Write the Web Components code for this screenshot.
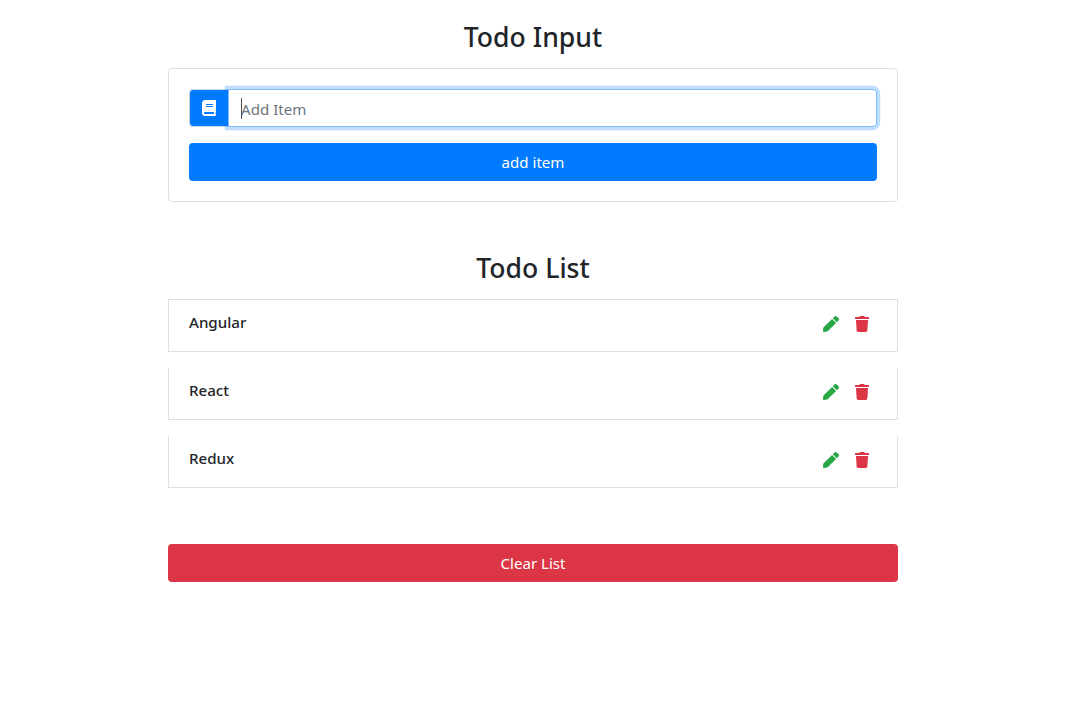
<!DOCTYPE html>
<html lang="en">
<head>
<meta charset="utf-8">
<title>Todo</title>
<style>
body { margin: 0; background: #fff; color: #212529; font: 400 15.1px/24px "Noto Sans", "Open Sans", sans-serif; }
</style>
</head>
<body>
<todo-app></todo-app>
<script>
const ICONS = {
  book: [448, "M448 360V24c0-13.3-10.7-24-24-24H96C43 0 0 43 0 96v320c0 53 43 96 96 96h328c13.3 0 24-10.7 24-24v-16c0-7.5-3.5-14.3-8.9-18.7-4.2-15.4-4.2-59.3 0-74.7 5.4-4.3 8.9-11.1 8.9-18.6zM128 134c0-3.3 2.7-6 6-6h212c3.3 0 6 2.7 6 6v20c0 3.3-2.7 6-6 6H134c-3.3 0-6-2.7-6-6v-20zm0 64c0-3.3 2.7-6 6-6h212c3.3 0 6 2.7 6 6v20c0 3.3-2.7 6-6 6H134c-3.3 0-6-2.7-6-6v-20zm253.4 250H96c-17.7 0-32-14.3-32-32 0-17.6 14.4-32 32-32h285.4c-1.9 17.1-1.9 46.9 0 64z"],
  pen: [512, "M290.74 93.24l128.02 128.02-277.99 277.99-114.14 12.6C11.35 513.54-1.56 500.62.14 485.34l12.7-114.22 277.9-277.88zm207.2-19.06l-60.11-60.11c-18.75-18.75-49.16-18.75-67.91 0l-56.55 56.55 128.02 128.02 56.55-56.55c18.75-18.76 18.75-49.16 0-67.91z"],
  trash: [448, "M432 32H312l-9.4-18.7A24 24 0 0 0 281.1 0H166.8a23.72 23.72 0 0 0-21.4 13.3L136 32H16A16 16 0 0 0 0 48v32a16 16 0 0 0 16 16h416a16 16 0 0 0 16-16V48a16 16 0 0 0-16-16zM53.2 467a48 48 0 0 0 47.9 45h245.8a48 48 0 0 0 47.9-45L416 128H32z"]
};
function define(name, html) {
  customElements.define(name, class extends HTMLElement {
    constructor() {
      super();
      const t = document.createElement("template");
      t.innerHTML = html;
      this.attachShadow({ mode: "open" }).append(t.content.cloneNode(true));
    }
  });
}
customElements.define("fa-icon", class extends HTMLElement {
  connectedCallback() {
    if (this.shadowRoot) return;
    const [w, d] = ICONS[this.getAttribute("name")];
    this.attachShadow({ mode: "open" }).innerHTML =
      `<style>:host{display:block;flex:none}svg{display:block;height:16px;width:${w / 32}px}</style>
       <svg viewBox="0 0 ${w} 512"><path fill="currentColor" d="${d}"/></svg>`;
  }
});
define("todo-heading", `<style>
  :host{display:block}
  h3{margin:0;font-size:26.6px;line-height:34px;font-weight:500;text-align:center}
  </style><h3><slot></slot></h3>`);
define("todo-button", `<style>
  :host{display:block}
  button{display:block;box-sizing:border-box;width:100%;height:38px;padding:0;border:0;border-radius:4px;background:var(--fill);color:#fff;font:inherit}
  </style><button type="button"><slot></slot></button>`);
define("todo-input", `<style>
  :host{display:block;box-sizing:border-box;border:1px solid #dfdfdf;border-radius:4px;padding:20px}
  .group{display:flex;height:38px;margin-bottom:16px}
  .prefix{position:relative;box-sizing:border-box;width:40px;margin-right:-1px;display:flex;align-items:center;justify-content:center;background:#007bff;color:#fff;border:1px solid #ced4da;border-radius:4px 0 0 4px}
  .field{position:relative;flex:1;display:flex}
  input{box-sizing:border-box;width:100%;margin:0;padding:8px 12px 6px;border:1px solid #80bdff;border-radius:0 4px 4px 0;box-shadow:0 0 0 3.2px rgba(0,123,255,.25);background:#fff;color:#495057;font:inherit;outline:0}
  input::placeholder{color:#6c757d;opacity:1}
  .caret{position:absolute;left:13px;top:9px;width:1px;height:21px;background:#495057}
  </style>
  <div class="group"><div class="prefix"><fa-icon name="book"></fa-icon></div>
  <div class="field"><input type="text" placeholder="Add Item"><span class="caret"></span></div></div>
  <todo-button style="--fill:#007bff">add item</todo-button>`);
define("todo-item", `<style>
  :host{display:flex;box-sizing:border-box;height:52px;margin-bottom:16px;padding:12px 20px;border:solid #dfdfdf;border-width:0 1px 1px;justify-content:space-between}
  :host([first]){height:53px;border-top-width:1px}
  h6{margin:0;font-size:15.1px;line-height:20px;font-weight:500}
  .actions{display:flex;gap:16px;padding:4px 8px 0 0}
  </style><h6><slot></slot></h6>
  <div class="actions"><fa-icon name="pen" style="color:#28a745"></fa-icon><fa-icon name="trash" style="color:#dc3545"></fa-icon></div>`);
define("todo-app", `<style>
  :host{display:block;width:730px;margin-left:168px;padding-top:20px}
  todo-input{margin-top:14px}
  .list-title{margin-top:49px;margin-bottom:14px}
  .clear{margin-top:56px}
  </style>
  <todo-heading>Todo Input</todo-heading>
  <todo-input></todo-input>
  <todo-heading class="list-title">Todo List</todo-heading>
  <todo-item first>Angular</todo-item>
  <todo-item>React</todo-item>
  <todo-item>Redux</todo-item>
  <todo-button class="clear" style="--fill:#dc3545">Clear List</todo-button>`);
</script>
</body>
</html>
